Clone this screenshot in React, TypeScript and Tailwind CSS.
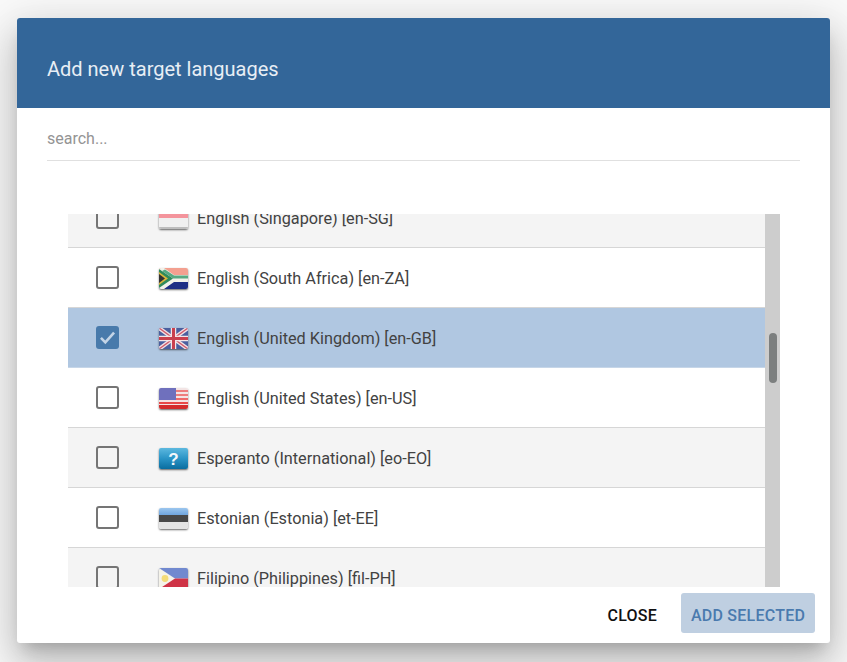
import type { ReactNode } from 'react'

function Flag({ children }: { children: ReactNode }) {
  return (
    <div className="w-[29px] h-[21px] mt-[1px] shrink-0 rounded-[2px] overflow-hidden shadow-[0_1px_2px_rgba(0,0,0,0.6)]">
      <svg viewBox="0 0 29 21" width="29" height="21" className="block">
        {children}
      </svg>
    </div>
  )
}

const flags: Record<string, ReactNode> = {
  sg: (
    <>
      <rect width="29" height="21" fill="#f0f0f0" />
      <rect width="29" height="10" fill="#f4949c" />
      <rect y="19" width="29" height="2" fill="#bdbdbd" />
    </>
  ),
  za: (
    <>
      <rect width="29" height="7" fill="#f3a090" />
      <rect y="14" width="29" height="7" fill="#1e2f85" />
      <rect y="7" width="29" height="7" fill="#3f9a70" />
      <path d="M0 0 L5 0 L15 7 L29 7 L29 14 L15 14 L5 21 L0 21 Z" fill="#f2f2ea" />
      <path d="M0 1 L14 10.5 L0 20 Z" fill="#2f8a5c" />
      <path d="M0 4 L9 10.5 L0 17 Z" fill="#d9b53c" />
      <path d="M0 6 L6 10.5 L0 15 Z" fill="#333" />
      <path d="M3 3 L14 10.5 H29 V7.5 H15 L6 1.5 Z" fill="#57a982" />
    </>
  ),
  gb: (
    <>
      <rect width="29" height="21" fill="#4a5f9f" />
      <path d="M0 0 L29 21 M29 0 L0 21" stroke="#f0dfe3" strokeWidth="4" />
      <path d="M0 0 L29 21 M29 0 L0 21" stroke="#cf5a6a" strokeWidth="1.4" />
      <path d="M14.5 0 V21 M0 10.5 H29" stroke="#f3e6e8" strokeWidth="5.5" />
      <path d="M14.5 0 V21 M0 10.5 H29" stroke="#c9404e" strokeWidth="3" />
    </>
  ),
  us: (
    <>
      <rect width="29" height="21" fill="#f3e4e4" />
      <rect y="2" width="29" height="2" fill="#ee7d7d" />
      <rect y="6" width="29" height="2" fill="#ee7d7d" />
      <rect y="10" width="29" height="2" fill="#ee6a6a" />
      <rect y="14" width="29" height="2" fill="#e84a4a" />
      <rect y="17" width="29" height="4" fill="#d42c2c" />
      <rect width="17" height="12" fill="#6f70bd" />
    </>
  ),
  eo: (
    <>
      <defs>
        <linearGradient id="eo-blue" x1="0" y1="0" x2="0" y2="1">
          <stop offset="0" stopColor="#5cb8df" />
          <stop offset="0.5" stopColor="#2a94c6" />
          <stop offset="1" stopColor="#0a6d9f" />
        </linearGradient>
      </defs>
      <rect width="29" height="21" fill="url(#eo-blue)" />
      <text x="14.5" y="16.5" textAnchor="middle" fontSize="17" fontWeight="700" fill="#f4f8fb" fontFamily="'Liberation Sans', sans-serif">?</text>
    </>
  ),
  et: (
    <>
      <defs>
        <linearGradient id="et-blue" x1="0" y1="0" x2="0" y2="1">
          <stop offset="0" stopColor="#9cc6ee" />
          <stop offset="1" stopColor="#6fa5de" />
        </linearGradient>
      </defs>
      <rect width="29" height="7" fill="url(#et-blue)" />
      <rect y="7" width="29" height="7" fill="#484848" />
      <rect y="14" width="29" height="7" fill="#e4e4e4" />
    </>
  ),
  ph: (
    <>
      <rect width="29" height="10.5" fill="#7189cf" />
      <rect y="10.5" width="29" height="10.5" fill="#cf3346" />
      <path d="M0 0 L16 10.5 L0 21 Z" fill="#f5f3ea" />
      <circle cx="6" cy="10.5" r="3.4" fill="#f4dc78" />
    </>
  ),
}

const languages = [
  { name: 'English (Singapore) [en-SG]', flag: 'sg' },
  { name: 'English (South Africa) [en-ZA]', flag: 'za' },
  { name: 'English (United Kingdom) [en-GB]', flag: 'gb', selected: true },
  { name: 'English (United States) [en-US]', flag: 'us' },
  { name: 'Esperanto (International) [eo-EO]', flag: 'eo' },
  { name: 'Estonian (Estonia) [et-EE]', flag: 'et' },
  { name: 'Filipino (Philippines) [fil-PH]', flag: 'ph' },
]

function Checkbox({ checked }: { checked?: boolean }) {
  if (checked) {
    return (
      <div className="w-[23px] h-[23px] rounded-[3px] bg-[#487aab] flex items-center justify-center">
        <svg viewBox="0 0 24 24" width="21" height="21" fill="none" stroke="#c3d4e6" strokeWidth="3">
          <path d="M4.5 12.5 L9.5 17.5 L19.5 6.5" />
        </svg>
      </div>
    )
  }
  return <div className="w-[23px] h-[23px] rounded-[3px] border-2 border-[#757575]" />
}

export default function App() {
  return (
    <div className="w-[847px] h-[662px] overflow-hidden bg-[#fafafa] pt-[18px] pl-[17px] font-['Roboto',sans-serif]">
      <div className="w-[813px] h-[625px] bg-white rounded-[3px] overflow-hidden shadow-[0_11px_15px_-7px_rgba(0,0,0,0.2),0_24px_38px_3px_rgba(0,0,0,0.14),0_9px_46px_8px_rgba(0,0,0,0.12)] flex flex-col">
        <div className="h-[90px] shrink-0 bg-[#336699] flex items-center px-[30px] pt-[12px]">
          <h2 className="text-[20px] leading-none text-[#e8eef5]">Add new target languages</h2>
        </div>

        <div className="mx-[30px] mt-[20px] h-[33px] shrink-0 border-b border-[#e0e0e0] text-[16px] leading-[21px] text-[#949494]">
          search...
        </div>

        <div className="mt-[53px] ml-[51px] w-[712px] h-[373px] shrink-0 flex overflow-hidden">
          <div className="flex-1 overflow-hidden">
            <div className="-mt-[26px]">
              {languages.map((lang, i) => (
                <div
                  key={lang.flag}
                  className={`h-[60px] border-b flex items-center ${
                    lang.selected
                      ? 'bg-[#b0c7e1] border-[#c6d6e8]'
                      : i % 2 === 0
                        ? 'bg-[#f4f4f4] border-[#d6d6d6]'
                        : 'bg-white border-[#d6d6d6]'
                  }`}
                >
                  <div className="ml-[28px] mr-[40px]">
                    <Checkbox checked={lang.selected} />
                  </div>
                  <Flag>{flags[lang.flag]}</Flag>
                  <span className="ml-[9px] pt-[2px] text-[16.25px] leading-[24px] text-[#424242]">{lang.name}</span>
                </div>
              ))}
            </div>
          </div>
          <div className="w-[15px] shrink-0 bg-[#cdcdcd] pt-[119px] pl-[4px]">
            <div className="w-[8px] h-[50px] rounded-[4px] bg-[#7c7f7f]" />
          </div>
        </div>

        <div className="flex-1 flex items-start justify-end pt-[6px] pr-[15px]">
          <button className="h-[40px] pt-[5px] mr-[24px] text-[16px] font-medium tracking-[0.015em] text-[#111]">CLOSE</button>
          <button className="w-[134px] h-[40px] pt-[5px] rounded-[3px] bg-[#bfcfe1] text-[16px] font-medium tracking-[0.015em] text-[#4a7aae]">ADD SELECTED</button>
        </div>
      </div>
    </div>
  )
}
